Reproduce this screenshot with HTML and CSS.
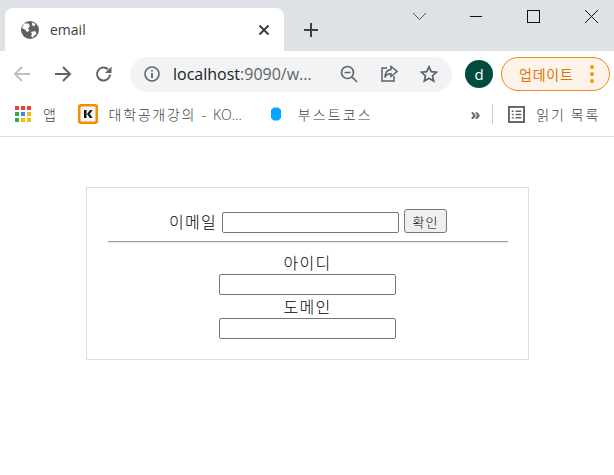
FILE: index.html
```html
<!DOCTYPE html>
<html lang="ko">
<head>
<meta charset="utf-8">
<title>email</title>
<link rel="stylesheet" href="styles.css">
</head>
<body>
<header class="chrome">
  <div class="tabstrip">
    <div class="tab">
      <svg class="tab-globe" width="18" height="18" viewBox="0 0 18 18"><circle cx="9" cy="9" r="9" fill="#5f6368"/><path d="M3 2.500 7.500 2.500 9 5 7 7.500 8.500 9.500 6 11 4 8.500 1 7Z M10 11 14 10 15.500 12.500 11.500 16.500 10 15 11 13Z M11 1.500 14.500 3 13 5.500 11 4Z" fill="#fff"/></svg>
      <span class="tab-title">email</span>
      <svg class="tab-close" width="10" height="10" viewBox="0 0 10 10"><path d="M0.500 0.500 9.500 9.500M9.500 0.500 0.500 9.500" stroke="#3c4043" stroke-width="2" fill="none"/></svg>
    </div>
    <svg class="newtab" width="16" height="16" viewBox="0 0 16 16"><path d="M8 1V15M1 8H15" stroke="#3c4043" stroke-width="2" fill="none"/></svg>
    <div class="winctl">
      <svg class="winbtn" width="57" height="32" viewBox="0 0 57 32"><path d="M27 13 33.500 19.500 40 13" stroke="#555" fill="none"/></svg>
      <svg class="winbtn" width="57" height="32" viewBox="0 0 57 32"><path d="M27 16.500H39" stroke="#111" fill="none"/></svg>
      <svg class="winbtn" width="57" height="32" viewBox="0 0 57 32"><rect x="27.500" y="10.500" width="12" height="12" stroke="#111" fill="none"/></svg>
      <svg class="winbtn" width="57" height="32" viewBox="0 0 57 32"><path d="M28 10 41 23M41 10 28 23" stroke="#111" fill="none"/></svg>
    </div>
  </div>
  <div class="toolbar">
    <svg class="navicon" width="18" height="18" viewBox="0 0 18 18"><path d="M17 9H2M9 2 2 9 9 16" stroke="#bdc1c6" stroke-width="2" fill="none"/></svg>
    <svg class="navicon" width="18" height="18" viewBox="0 0 18 18"><path d="M1 9H16M9 2 16 9 9 16" stroke="#5f6368" stroke-width="2" fill="none"/></svg>
    <svg class="navicon" width="18" height="18" viewBox="0 0 18 18"><path d="M15 9.500A6.500 6.500 0 1 1 13 4.300" stroke="#5f6368" stroke-width="2" fill="none"/><path d="M16.500 1.500V8H10Z" fill="#5f6368"/></svg>
    <div class="omnibox">
      <svg class="info" width="16" height="16" viewBox="0 0 16 16"><circle cx="8" cy="8" r="7" stroke="#5f6368" stroke-width="1.600" fill="none"/><path d="M8 7V12M8 4V5.600" stroke="#5f6368" stroke-width="1.800"/></svg>
      <span class="url">localhost<span class="url-rest">:9090/w...</span></span>
      <svg class="omni-icon" width="18" height="18" viewBox="0 0 18 18"><circle cx="7.500" cy="7.500" r="6" stroke="#5f6368" stroke-width="1.700" fill="none"/><path d="M4.500 7.500H10.500M12 12 17 17" stroke="#5f6368" stroke-width="1.700"/></svg>
      <svg class="omni-icon" width="18" height="18" viewBox="0 0 18 18"><path d="M7 3H2V16H14V11" stroke="#5f6368" stroke-width="1.500" fill="none"/><path d="M11 1.500 17 6.500 11 11.500V8.800C8 8.800 6 10 5 12.500 5 8.500 7 5 11 4.500Z" stroke="#5f6368" stroke-width="1.500" fill="none"/></svg>
      <svg class="omni-icon" width="18" height="18" viewBox="0 0 18 18"><path d="M9 1.800 11.200 6.700 16.500 7.200 12.500 10.700 13.700 16 9 13.200 4.300 16 5.500 10.700 1.500 7.200 6.800 6.700Z" stroke="#5f6368" stroke-width="1.700" fill="none"/></svg>
    </div>
    <div class="avatar">d</div>
    <div class="update">
      <span class="update-label">업데이트</span>
      <span class="dots"><i></i><i></i><i></i></span>
    </div>
  </div>
  <div class="bookmarks">
    <span class="bm bm-apps">
      <svg width="16" height="16" viewBox="0 0 16 16">
        <g fill="#ea4335"><rect width="4" height="4"/><rect x="6" width="4" height="4"/><rect x="12" width="4" height="4"/></g>
        <rect y="6" width="4" height="4" fill="#34a853"/><rect x="6" y="6" width="4" height="4" fill="#4285f4"/><rect x="12" y="6" width="4" height="4" fill="#fbbc04"/>
        <rect y="12" width="4" height="4" fill="#34a853"/><rect x="6" y="12" width="4" height="4" fill="#fbbc04"/><rect x="12" y="12" width="4" height="4" fill="#fbbc04"/>
      </svg>
      <span class="bm-text">앱</span>
    </span>
    <span class="bm bm-kocw">
      <svg width="20" height="20" viewBox="0 0 20 20"><rect width="20" height="20" rx="3" fill="#f28c00"/><rect x="2.500" y="2.500" width="15" height="15" rx="1" fill="#f6f6f6"/><path d="M6 6H8.500V14H6ZM9 10 12 6H14.500L11.800 10 14.500 14H12Z" fill="#111"/></svg>
      <span class="bm-text">대학공개강의 - <span class="latin">KO...</span></span>
    </span>
    <span class="bm bm-boost">
      <svg width="10" height="14" viewBox="0 0 10 14"><path d="M2.500 0.500H7.500L10 3V11L7.500 13.500H2.500L0 11V3Z" fill="#00a8ff"/></svg>
      <span class="bm-text">부스트코스</span>
    </span>
    <span class="more">»</span>
    <span class="sep"></span>
    <span class="bm bm-read">
      <svg width="17" height="17" viewBox="0 0 18 18"><rect x="1" y="1" width="16" height="16" stroke="#5f6368" stroke-width="2" fill="none"/><path d="M4 5.500H6M8 5.500H14M4 9H6M8 9H14M4 12.500H6M8 12.500H14" stroke="#5f6368" stroke-width="1.500"/></svg>
      <span class="bm-text">읽기 목록</span>
    </span>
  </div>
</header>
<main class="page">
  <section class="card">
    <div class="row">
      <label class="label">이메일</label>
      <input class="field" type="text">
      <button class="confirm" type="button">확인</button>
    </div>
    <hr class="rule">
    <div class="stack">
      <label class="label">아이디</label>
      <input class="field" type="text">
      <label class="label">도메인</label>
      <input class="field" type="text">
    </div>
  </section>
</main>
</body>
</html>
```
FILE: styles.css
```css
* { box-sizing: border-box; }
html, body { margin: 0; padding: 0; background: #fff; overflow: hidden; }
body { font-family: "Noto Sans CJK KR", "Noto Sans", sans-serif; color: #000; }

.chrome { font-family: "Open Sans", "Noto Sans CJK KR", sans-serif; border-bottom: 1px solid #dadce0; }

.tabstrip { height: 51px; background: #dee1e6; display: flex; align-items: flex-end; padding-left: 5px; }
.tab { width: 279px; height: 43px; background: #fff; border-radius: 8px 8px 0 0; display: flex; align-items: center; padding: 0 15px 0 16px; }
.tab-globe { flex: none; margin-right: 11px; }
.tab-title { flex: 1; font-size: 14px; color: #3c4043; }
.tab-close { flex: none; }
.newtab { margin: 0 0 13px 19px; }
.winctl { margin-left: auto; align-self: flex-start; display: flex; }
.winbtn { display: block; }

.toolbar { height: 41px; display: flex; align-items: center; padding: 5px 4px 0 13px; }
.navicon { flex: none; margin-right: 23px; }
.omnibox { flex: none; width: 322px; height: 35px; margin-left: -6px; background: #f1f3f4; border-radius: 18px; display: flex; align-items: center; padding: 0 14px; }
.info { flex: none; margin-right: 13px; }
.url { flex: 1; font-size: 16px; color: #202124; white-space: nowrap; }
.url-rest { color: #5f6368; }
.omni-icon { flex: none; margin-left: 22px; }
.avatar { flex: none; width: 28px; height: 28px; margin-left: 13px; border-radius: 50%; background: #004d40; color: #fff; font-size: 15px; display: flex; align-items: center; justify-content: center; }
.update { flex: none; width: 109px; height: 34px; margin-left: 8px; background: #fdf3e9; border: 1.500px solid #ee8a1c; border-radius: 17px; display: flex; align-items: center; justify-content: space-between; padding: 0 15px 0 17px; color: #d9730d; }
.update-label { font-size: 14px; letter-spacing: 0.800px; white-space: nowrap; }
.dots { display: flex; flex-direction: column; gap: 3px; }
.dots i { display: block; width: 4px; height: 4px; border-radius: 50%; background: #f29900; }

.bookmarks { height: 44px; display: flex; align-items: center; padding: 0 14px 0 15px; font-size: 14px; color: #3c4043; }
.bm { display: flex; align-items: center; white-space: nowrap; }
.bm-text { font-weight: 300; letter-spacing: 1.700px; }
.latin { letter-spacing: 0; }
.bm-apps .bm-text { margin-left: 12px; }
.bm-apps { margin-right: 20px; }
.bm-kocw .bm-text { margin-left: 11px; }
.bm-kocw { margin-right: 29px; }
.bm-boost .bm-text { margin-left: 17px; letter-spacing: 2.100px; }
.more { margin-left: auto; font-size: 16px; font-weight: 700; color: #5f6368; }
.sep { width: 1px; height: 20px; background: #c8cacd; margin: 0 15px 0 12px; }
.bm-read .bm-text { margin-left: 11px; letter-spacing: 1.700px; }

.page { padding: 50px 85px 0 86px; }
.card { width: 443px; height: 173px; border: 1px solid #ddd; padding: 21px 20px 0 21px; }
.row { display: flex; justify-content: center; align-items: flex-end; height: 24px; }
.row .label { align-self: center; margin-right: 5px; }
.row .field { margin-right: 5px; }
.label { font-size: 16px; line-height: 22px; font-weight: 300; letter-spacing: 1.300px; }
.field { width: 177px; height: 21px; border: 1px solid #767676; border-radius: 2px; padding: 1px 2px; background: #fff; margin: 0; }
.confirm { width: 43px; height: 24px; padding: 0; border: 1px solid #767676; border-radius: 3px; background: #efefef; font-family: inherit; font-size: 13px; font-weight: 300; letter-spacing: 1px; color: #000; }
.rule { margin: 8px 0 0; height: 2px; border: 0; border-top: 1px solid #a0a0a0; border-bottom: 1px solid #e5e5e5; }
.stack { display: flex; flex-direction: column; align-items: center; padding: 8px 1px 0 0; }
.stack .label { line-height: 23px; }
```
